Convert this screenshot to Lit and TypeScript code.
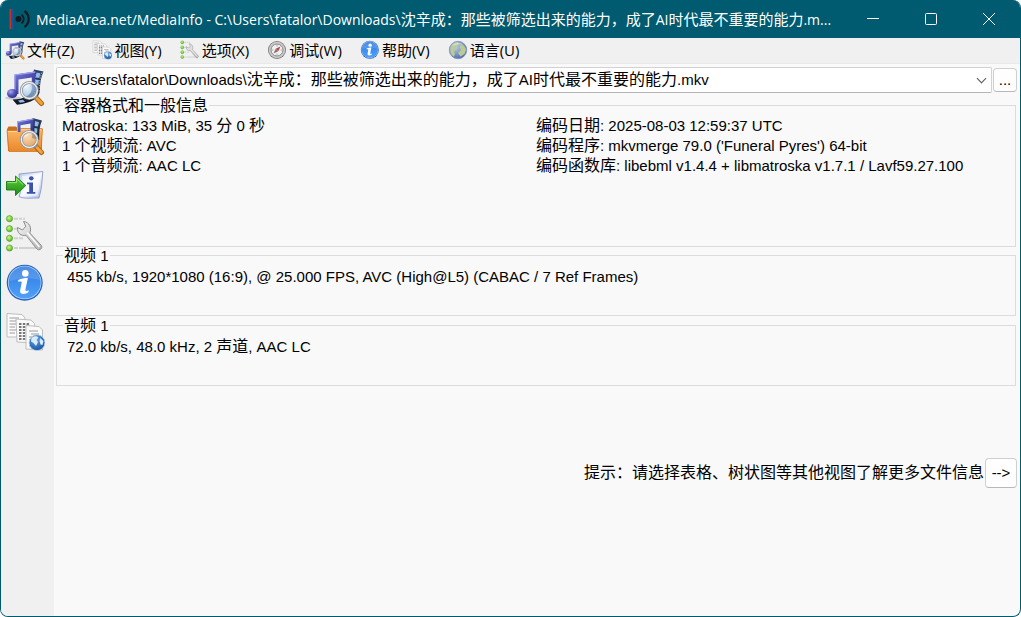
import { LitElement, html, css, svg } from "lit";
import { customElement } from "lit/decorators.js";

const defs = svg`<defs>
  <linearGradient id="note" x1="0" y1="0" x2="1" y2="1"><stop offset="0" stop-color="#7478d8"/><stop offset="1" stop-color="#272b86"/></linearGradient>
  <linearGradient id="folder" x1="0" y1="0" x2="0" y2="1"><stop offset="0" stop-color="#ffb765"/><stop offset="1" stop-color="#e8872b"/></linearGradient>
  <linearGradient id="film" x1="0" y1="0" x2="0" y2="1"><stop offset="0" stop-color="#2f4266"/><stop offset="1" stop-color="#10151f"/></linearGradient>
  <linearGradient id="arrow" x1="0" y1="0" x2="0" y2="1"><stop offset="0" stop-color="#5fd03c"/><stop offset="1" stop-color="#1c8a12"/></linearGradient>
  <linearGradient id="page" x1="0" y1="0" x2="1" y2="1"><stop offset="0" stop-color="#b9c9ee"/><stop offset=".5" stop-color="#f6f8ff"/><stop offset="1" stop-color="#a8b8e2"/></linearGradient>
  <linearGradient id="steel" x1="0" y1="0" x2="1" y2="1"><stop offset="0" stop-color="#f4f4f4"/><stop offset="1" stop-color="#b4b4b4"/></linearGradient>
  <radialGradient id="ball" cx=".35" cy=".3" r=".8"><stop offset="0" stop-color="#a9abef"/><stop offset=".5" stop-color="#5054b8"/><stop offset="1" stop-color="#25287c"/></radialGradient>
  <radialGradient id="lens" cx=".35" cy=".3" r=".8"><stop offset="0" stop-color="#e6f3fd"/><stop offset="1" stop-color="#6fa4d6"/></radialGradient>
  <radialGradient id="amber" cx=".35" cy=".3" r=".8"><stop offset="0" stop-color="#fff0dc"/><stop offset="1" stop-color="#d9a56c"/></radialGradient>
  <radialGradient id="led" cx=".4" cy=".35" r=".7"><stop offset="0" stop-color="#c8f78e"/><stop offset="1" stop-color="#52b318"/></radialGradient>
  <linearGradient id="blue" x1="0" y1="0" x2="0" y2="1"><stop offset="0" stop-color="#2e7be0"/><stop offset="1" stop-color="#4ea0fa"/></linearGradient>
  <radialGradient id="globe" cx=".4" cy=".3" r=".8"><stop offset="0" stop-color="#5fa6e8"/><stop offset="1" stop-color="#114a94"/></radialGradient>
  <radialGradient id="earth" cx=".35" cy=".3" r=".8"><stop offset="0" stop-color="#b9d0ee"/><stop offset="1" stop-color="#4667a4"/></radialGradient>
</defs>`;

const magnifier = (glass: string) => svg`
  <path d="M30 29.5 36.5 36.5" stroke="#a8641a" stroke-width="5" stroke-linecap="round"/>
  <path d="M31.5 31 36.3 36.2" stroke="#f0a238" stroke-width="3.2" stroke-linecap="round"/>
  <path d="M29.5 29 31.5 31.2" stroke="#8d8d8d" stroke-width="3.4"/>
  <circle cx="24.3" cy="23.5" r="8" fill="url(#${glass})" fill-opacity=".72" stroke="#8e939a" stroke-width="2.8"/>
  <circle cx="24.3" cy="23.5" r="8" fill="none" stroke="#eceef0" stroke-width="1.3"/>
  <path d="M18.8 22c1-3.4 4.5-5 8-4.2-3 .6-6 2-8 4.200z" fill="#fff" fill-opacity=".8"/>`;

const mediaIcon = svg`
  <ellipse cx="8" cy="31" rx="8" ry="1.600" fill="#000" fill-opacity=".15"/>
  <path d="M29 2.500 38.500 4.500C35.500 12 35 17 35 23 34.500 31 27 36 12 37.800L7.500 32.500C19 32 25.500 29 27 22 28 15 27 9 29 2.500z" fill="url(#film)"/>
  <path d="M31.500 5.500 35.500 6.300 34.300 11 30.500 10.500zM30.300 12.500 34 13 33.400 18 30.100 17.500zM13 33.600 18 32.700 20 34.900 15 35.700z" fill="#8fb9e8"/>
  <path d="M29.900 4.500v31M37 5.500C34.500 12 34 18 34.200 26" fill="none" stroke="#dfe6f2" stroke-width=".8" stroke-dasharray="1.200 1.400"/>
  <path d="M9.500 7.500 30 4.500V24H26.800V10.500L13.500 12.500V27H9.500z" fill="url(#note)"/>
  <path d="M9.500 7.500 30 4.500v1.200L10.500 8.600v16h-1z" fill="#9fa3ee"/>
  <ellipse cx="7.200" cy="26.500" rx="5.200" ry="4.600" fill="url(#ball)"/>
  ${magnifier("lens")}`;

const folderIcon = svg`
  <path d="M2 13 3.500 10.500H11L13 12.500H37V35H3z" fill="#c9701f"/>
  <path d="M2 14.500H12L14 12.800H37.500L36 35.500H4z" fill="url(#folder)" stroke="#d3771f" stroke-width=".8"/>
  <path d="M3 15.500H12.500L14.500 13.800H36.500" fill="none" stroke="#ffd9a6"/>
  <path d="M27.500 2 37 4.500C34.500 10 34 16 34.200 24L27 22C28 14 26.500 9 27.500 2z" fill="url(#film)"/>
  <path d="M30 5 34 6.200 32.800 10.500 29.600 10zM29.400 12 32.400 12.500 32.200 17 29.400 16.500z" fill="#8fb9e8"/>
  <path d="M12 5.500 28.500 2.500V17H25.500V7.500L15.500 9.300V16H12z" fill="url(#note)"/>
  <path d="M12 5.500 28.500 2.500v1L13 6.500V16h-1z" fill="#9fa3ee"/>
  ${magnifier("amber")}`;

const exportIcon = svg`
  <path d="M14 9 37.800 6.500C37 15 37 23 34 33 26 33 19 34 14 31.500 17 25 14.500 18 14 9z" fill="url(#page)" stroke="#7f8fc4" stroke-width=".8"/>
  <path d="M17 11 35.500 9.200C35 17 34.600 23 32.500 30.500 26 30.800 22 31 18 30 19.600 23 17.600 17 17 11z" fill="#fff" fill-opacity=".6"/>
  <ellipse cx="26.300" cy="13.300" rx="2.300" ry="2.100" fill="#3a52ae"/>
  <path d="M22 17.500H28V27H30.300V28.800H21.800V27H24.200V19.200H22z" fill="#3a52ae"/>
  <path d="M1.500 16.500H10.500V11L20.800 20.500 10.500 30.500V25H1.500z" fill="url(#arrow)" stroke="#167a12" stroke-width=".9" stroke-linejoin="round"/>
  <path d="M2.500 17.600H11.500V13.500L18 19.500" fill="none" stroke="#a4ee80" stroke-width=".9"/>`;

const optionsIcon = svg`
  <path d="M9 4.700H13M14 4.700H17M18 4.700H20M9 14.700H14M9 24.300H13M14 24.300H18M9 34H13M14 34H33" stroke="#bdbdbd" stroke-opacity=".6" stroke-width="2"/>
  ${[4.7, 14.7, 24.3, 34].map((y) => svg`<circle cx="4.500" cy="${y}" r="3.100" fill="url(#led)" stroke="#4ba01e" stroke-width=".6"/>`)}
  <path d="M12.500 13.500C12 19 16 22.500 21 21.200L31.500 34.600C33.500 37.500 38.500 34.500 36.200 31.300L24.800 19C27 14 24.500 8 18.500 7.500L20.800 12.200 17.600 16z" fill="url(#steel)" stroke="#8d8d8d" stroke-width="1" stroke-linejoin="round"/>
  <path d="M22 18.500 34.500 33" stroke="#fff" stroke-width="1.300"/>`;

const infoIcon = svg`
  <circle cx="19.700" cy="19.700" r="18" fill="#1f5fc0"/>
  <circle cx="19.700" cy="19.500" r="16.800" fill="#b5d4fb"/>
  <circle cx="19.700" cy="19.500" r="16" fill="url(#blue)"/>
  <path d="M4.500 18C5 9 12 3.800 20 3.800S34 9.500 35 17C26 14 14 15 4.500 18z" fill="#fff" fill-opacity=".14"/>
  <circle cx="20.300" cy="10.400" r="3.300" fill="#fff"/>
  <path d="M13.200 16.900C17 15.300 20.600 14.800 22.900 15L20.400 26.500C20.100 28.300 21.300 28.300 23.800 27.200L23.400 29.300C20.300 31.400 14.600 31.900 15.100 27.700L16.700 19.600C16.900 18.500 16 18.400 13.100 18.700z" fill="#fff"/>`;

const viewIcon = svg`
  <path d="M2 1.500 17 2.500 20 6V25H2z" fill="#fbfbfb" stroke="#bdbdbd"/>
  <path d="M4.500 6H14M4.500 9H11M4.500 12H12M4.500 15H10M4.500 18H12M4.500 21H10" stroke="#9c9c9c" stroke-width="1.200"/>
  <path d="M11 7 26 8 29.500 11.500V31L12 30z" fill="#fafafa" stroke="#bdbdbd"/>
  <path d="M14 12H25M14 15H27M14 18H27M14 21H24M14 24H24M14 27H22" stroke="#777" stroke-width="1.800" stroke-dasharray="2.500 1.300"/>
  <path d="M21 13.500 34 14.500 37.500 18V38L21 37z" fill="#fafafa" stroke="#bdbdbd"/>
  <path d="M24 19H33M26 22H34M24 25H30M24 28H28M24 31H27M24 34H28" stroke="#9a9a9a" stroke-width="1.200"/>
  <circle cx="32" cy="30.700" r="7.900" fill="url(#globe)" stroke="#b9d3f0" stroke-width=".8"/>
  <path d="M26.500 26C29 23.500 32 24 33.500 25.500L31.500 28 33 30 31 34 28.500 31 26 29.500zM35 26 38.500 29 37.500 33 35.500 32.500 34.500 29z" fill="#dcebfb"/>`;

const debugIcon = svg`
  <circle cx="20" cy="20" r="18" fill="#777"/>
  <circle cx="20" cy="20" r="16.500" fill="#c9c9c9"/>
  <circle cx="20" cy="20" r="12" fill="#f1f1f1" stroke="#8a8a8a" stroke-width="2"/>
  <path d="M20 10V13M20 27V30M10 20H13M27 20H30" stroke="#aaa" stroke-width="2"/>
  <path d="M27 13 22.500 22.500 17.500 17.500z" fill="#d43b35"/>
  <path d="M13 27 22.500 22.500 17.500 17.500z" fill="#777"/>`;

const languageIcon = svg`
  <circle cx="20" cy="20" r="17.500" fill="url(#earth)" stroke="#7d93b8" stroke-width="1.500"/>
  <path d="M6 13C9 7 15 4 20 4L21 9 16 14 18 18 12 22 14 29 11 33C5 28 3 20 6 13zM26 8C32 10 35 14 36 20L33 28 25 33 20 26 26 20 23 14z" fill="#bccb96"/>
  <path d="M8 12C13 5 24 4 31 9 23 8 14 9 8 12z" fill="#fff" fill-opacity=".5"/>`;

const icon = (shape: unknown) =>
  html`<svg class="icon" viewBox="0 0 40 40" fill="none" aria-hidden="true">${defs}${shape}</svg>`;

// Chinese runs are set one step larger than the Latin text around them.
const mixed = (text: string) =>
  text
    .split(/([\u3000-\u303f\u4e00-\u9fff\uff00-\uffef]+)/)
    .map((part, i) => (i % 2 ? html`<span class="han">${part}</span>` : part));

const menus: [string, unknown][] = [
  ["文件(Z)", mediaIcon],
  ["视图(Y)", viewIcon],
  ["选项(X)", optionsIcon],
  ["调试(W)", debugIcon],
  ["帮助(V)", infoIcon],
  ["语言(U)", languageIcon],
];

const tools: [string, unknown][] = [
  ["打开文件", mediaIcon],
  ["打开文件夹", folderIcon],
  ["导出", exportIcon],
  ["选项", optionsIcon],
  ["关于", infoIcon],
  ["视图", viewIcon],
];

const general = [
  ["Matroska: 133 MiB, 35 分 0 秒", "1 个视频流: AVC", "1 个音频流: AAC LC"],
  [
    "编码日期: 2025-08-03 12:59:37 UTC",
    "编码程序: mkvmerge 79.0 ('Funeral Pyres') 64-bit",
    "编码函数库: libebml v1.4.4 + libmatroska v1.7.1 / Lavf59.27.100",
  ],
];

@customElement("app-root")
export class AppRoot extends LitElement {
  static styles = css`
    :host {
      display: block;
      height: 100vh;
      background: #fff;
      color: #000;
      font: 15px/20px "Liberation Sans", "Noto Sans CJK SC", sans-serif;
    }
    * { box-sizing: border-box; }
    button {
      font: inherit;
      color: inherit;
      margin: 0;
      padding: 0;
      border: 0;
      background: none;
    }
    .window {
      height: 100%;
      display: flex;
      flex-direction: column;
      overflow: hidden;
      border: 1px solid #005a70;
      border-top: 0;
      border-radius: 8px;
      background: #f9f9f9;
    }
    .titlebar {
      flex: none;
      height: 38px;
      display: flex;
      align-items: center;
      gap: 5px;
      padding: 0 2px 0 8px;
      background: #005a70;
      color: #fff;
      font-family: "Open Sans", "Noto Sans CJK SC", sans-serif;
    }
    .logo { flex: none; width: 22px; height: 22px; }
    .title {
      flex: 1;
      min-width: 0;
      margin: 0;
      font-size: 14px;
      font-weight: 400;
      white-space: nowrap;
      overflow: hidden;
    }
    .title .han { font-size: 15px; }
    .caption { display: flex; height: 100%; }
    .caption button { width: 58px; display: grid; place-items: center; }
    .caption svg { width: 14px; height: 14px; stroke: #fff; fill: none; }
    .menubar {
      flex: none;
      height: 26px;
      display: flex;
      align-items: center;
      gap: 18px;
      padding: 0 4px 1px;
      background: #f0f0f0;
      border-bottom: 1px solid #e9e9e9;
      font-family: "Open Sans", "Noto Sans CJK SC", sans-serif;
    }
    .menubar button { display: flex; align-items: center; gap: 2px; white-space: nowrap; }
    .menubar .icon { width: 20px; height: 20px; }
    .body { flex: 1; min-height: 0; display: flex; }
    .tools {
      flex: none;
      width: 53px;
      display: flex;
      flex-direction: column;
      gap: 9px;
      padding: 3px 4px;
      background: #f0f0f0;
    }
    .tools button { width: 40px; height: 40px; }
    .icon { display: block; width: 100%; height: 100%; }
    .main { flex: 1; min-width: 0; padding: 3px 3px 0 2px; }
    .path { display: flex; align-items: center; gap: 1px; }
    select, ::picker(select) { appearance: base-select; }
    select {
      flex: 1;
      min-width: 0;
      height: 26px;
      min-height: 0;
      display: flex;
      align-items: center;
      padding: 0 4px 0 3px;
      border: 1px solid #d2d2d2;
      border-bottom-color: #b4b4b4;
      border-radius: 2px;
      background: #fff;
      color: #000;
      font: inherit;
    }
    select::picker-icon {
      content: "";
      width: 6px;
      height: 6px;
      margin: 0 2px 4px auto;
      border: solid #555;
      border-width: 0 1px 1px 0;
      transform: rotate(45deg);
    }
    .value { flex: 1; text-align: left; white-space: nowrap; overflow: hidden; }
    .push {
      border: 1px solid #cfcfcf;
      border-bottom-color: #b8b8b8;
      border-radius: 4px;
      background: #fefefe;
    }
    .browse { width: 24px; height: 24px; }
    .next { width: 32px; height: 30px; }
    .han { font-size: 16px; }
    fieldset {
      min-width: 0;
      margin: 0 1px 1px 0;
      padding: 4px 5px 0 10px;
      border: 1px solid #dcdcdc;
      height: 69px;
    }
    legend { height: 16px; line-height: 18px; padding: 0 1px; margin-left: -4px; }
    .general {
      height: 150px;
      margin: 4px 1px 0 0;
      padding: 3px 5px 0 5px;
    }
    .general legend { margin-left: 1px; }
    .columns { display: grid; grid-template-columns: 1fr 1fr; }
    p { margin: 0; height: 20px; white-space: nowrap; }
    .hint {
      display: flex;
      justify-content: flex-end;
      align-items: center;
      gap: 1px;
      margin-top: 72px;
    }
  `;

  render() {
    return html`<div class="window">
      <header class="titlebar">
        <svg class="logo" viewBox="0 0 22 22" fill="none" aria-hidden="true">
          <path d="M1.500 1V21" stroke="#c8321e" stroke-width="2" />
          <path d="M3.500 1V21" stroke="#1c4fa0" stroke-width="2" />
          <circle cx="9.500" cy="11" r="3" fill="#101c22" />
          <path d="M12.500 6.500C15.500 9 15.500 13 12.500 15.500" stroke="#101c22" stroke-width="1.800" />
          <path d="M15.500 3C21 7 21 15 15.500 19" stroke="#101c22" stroke-width="2.200" />
        </svg>
        <h1 class="title">${mixed("MediaArea.net/MediaInfo - C:\\Users\\fatalor\\Downloads\\沈辛成：那些被筛选出来的能力，成了AI时代最不重要的能力.m...")}</h1>
        <div class="caption">
          <button aria-label="最小化"><svg viewBox="0 0 14 14"><path d="M1 6.500H13" /></svg></button>
          <button aria-label="最大化"><svg viewBox="0 0 14 14"><rect x="1.500" y="1.500" width="11" height="11" rx="1" /></svg></button>
          <button aria-label="关闭"><svg viewBox="0 0 14 14"><path d="M1 1 13 13M13 1 1 13" /></svg></button>
        </div>
      </header>
      <nav class="menubar">
        ${menus.map(([label, shape]) => html`<button>${icon(shape)}<span>${label}</span></button>`)}
      </nav>
      <div class="body">
        <aside class="tools">
          ${tools.map(([label, shape]) => html`<button aria-label=${label}>${icon(shape)}</button>`)}
        </aside>
        <main class="main">
          <div class="path">
            <select aria-label="文件">
              <button><span class="value">C:\\Users\\fatalor\\Downloads\\<span class="han">沈辛成：那些被筛选出来的能力，成了</span>AI<span class="han">时代最不重要的能力</span>.mkv</span></button>
              <option selected>C:\\Users\\fatalor\\Downloads\\沈辛成：那些被筛选出来的能力，成了AI时代最不重要的能力.mkv</option>
            </select>
            <button class="push browse" aria-label="浏览">...</button>
          </div>
          <fieldset class="general">
            <legend>${mixed("容器格式和一般信息")}</legend>
            <div class="columns">
              ${general.map((lines) => html`<div>${lines.map((line) => html`<p>${mixed(line)}</p>`)}</div>`)}
            </div>
          </fieldset>
          <fieldset>
            <legend>${mixed("视频 1")}</legend>
            <p>455 kb/s, 1920*1080 (16:9), @ 25.000 FPS, AVC (High@L5) (CABAC / 7 Ref Frames)</p>
          </fieldset>
          <fieldset>
            <legend>${mixed("音频 1")}</legend>
            <p>${mixed("72.0 kb/s, 48.0 kHz, 2 声道, AAC LC")}</p>
          </fieldset>
          <div class="hint">
            <span>${mixed("提示：请选择表格、树状图等其他视图了解更多文件信息")}</span>
            <button class="push next" aria-label="下一个视图">--&gt;</button>
          </div>
        </main>
      </div>
    </div>`;
  }
}
